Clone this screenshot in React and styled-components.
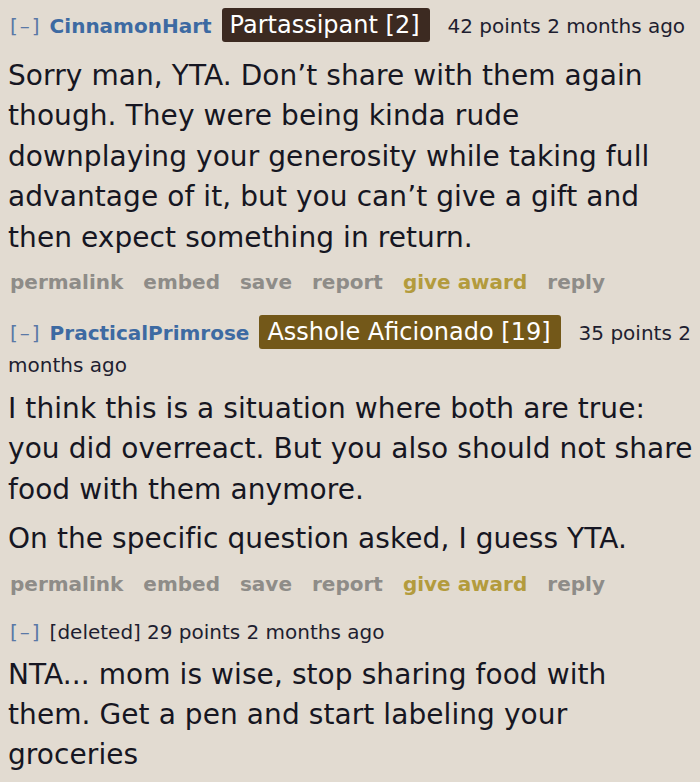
import React from 'react';
import styled, { createGlobalStyle } from 'styled-components';

const GlobalStyle = createGlobalStyle`
  html, body {
    margin: 0;
    padding: 0;
    background: #e2dbd1;
  }
  body {
    font-family: "DejaVu Sans", Verdana, sans-serif;
  }
`;

const Page = styled.div`
  width: 700px;
  height: 782px;
  overflow: hidden;
  background: #e2dbd1;
  padding: 9px 6px 0 8px;
  box-sizing: border-box;
`;

const Comment = styled.div`
  margin-bottom: ${(p) => p.$gap || 0}px;
`;

const Header = styled.div`
  font-size: 20px;
  line-height: 32px;
  color: #1e1e30;
  margin-right: -4px;
`;

const Toggle = styled.span`
  color: #5a78a6;
  letter-spacing: 2px;
  margin-left: 2px;
  margin-right: 8px;
`;

const Author = styled.span`
  color: #3d6aa2;
  font-weight: bold;
  margin-right: 11px;
`;

const Deleted = styled.span`
  color: #1e1e30;
  margin-right: 6px;
`;

const Flair = styled.span`
  background: ${(p) => p.$bg};
  color: #ffffff;
  font-size: 24px;
  padding: 3px 10px 3px 8px;
  border-radius: 3px;
  margin-left: -1px;
  margin-right: 18px;
`;

const Body = styled.div`
  font-size: 28px;
  line-height: 40.4px;
  letter-spacing: 0.08px;
  color: #161622;
  margin-top: ${(p) => p.$mt || 7}px;
`;

const Para = styled.p`
  margin: 0 0 ${(p) => p.$mb || 0}px 0;
`;

const Actions = styled.div`
  display: flex;
  gap: 20px;
  font-size: 20px;
  font-weight: bold;
  line-height: 30px;
  margin-top: 9px;
  padding-left: 2px;
`;

const Action = styled.span`
  color: ${(p) => (p.$gold ? '#b39b3d' : '#8e8c88')};
`;

function ActionBar() {
  return (
    <Actions>
      <Action>permalink</Action>
      <Action>embed</Action>
      <Action>save</Action>
      <Action>report</Action>
      <Action $gold>give award</Action>
      <Action>reply</Action>
    </Actions>
  );
}

export default function App() {
  return (
    <Page>
      <GlobalStyle />
      <Comment $gap={19}>
        <Header>
          <Toggle>[–]</Toggle>
          <Author>CinnamonHart</Author>
          <Flair $bg="#3c2a21">Partassipant [2]</Flair>
          42 points 2 months ago
        </Header>
        <Body $mt={14}>
          <Para>
            Sorry man, YTA. Don’t share with them again though. They were being kinda rude
            downplaying your generosity while taking full advantage of it, but you can’t give a
            gift and then expect something in return.
          </Para>
        </Body>
        <ActionBar />
      </Comment>
      <Comment $gap={17}>
        <Header>
          <Toggle>[–]</Toggle>
          <Author>PracticalPrimrose</Author>
          <Flair $bg="#735819">Asshole Aficionado [19]</Flair>
          35 points 2 months ago
        </Header>
        <Body $mt={8}>
          <Para $mb={9}>
            I think this is a situation where both are true: you did overreact. But you also
            should not share food with them anymore.
          </Para>
          <Para>On the specific question asked, I guess YTA.</Para>
        </Body>
        <ActionBar />
      </Comment>
      <Comment>
        <Header>
          <Toggle>[–]</Toggle>
          <Deleted>[deleted]</Deleted>
          29 points 2 months ago
        </Header>
        <Body>
          <Para>
            NTA... mom is wise, stop sharing food with them. Get a pen and start labeling your
            groceries
          </Para>
        </Body>
      </Comment>
    </Page>
  );
}
